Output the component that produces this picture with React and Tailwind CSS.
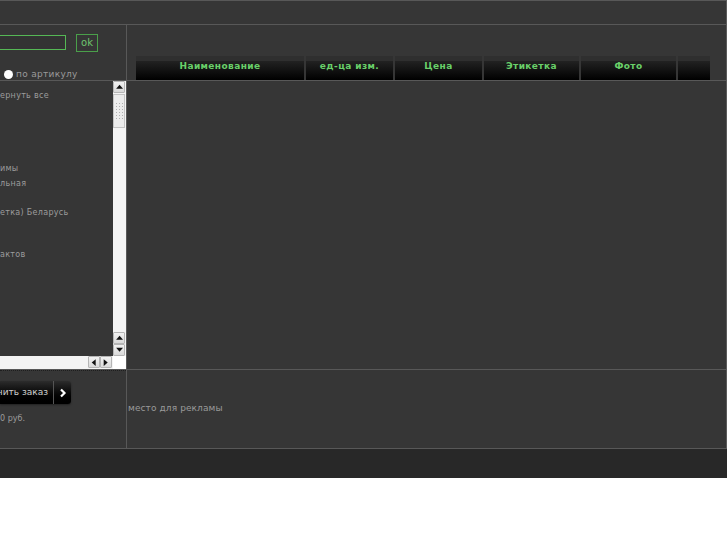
import React from "react";

const headers = [
  { label: "Наименование", w: "w-[168px]" },
  { label: "ед-ца изм.", w: "w-[87px]" },
  { label: "Цена", w: "w-[87px]" },
  { label: "Этикетка", w: "w-[95px]" },
  { label: "Фото", w: "w-[95px]" },
  { label: "", w: "w-[32px]" },
];

const Arrow = ({ dir }) => {
  const pts = {
    up: "1,5 4,1.5 7,5",
    down: "1,1.5 4,5 7,1.5",
    left: "5,1 1.5,4 5,7",
    right: "1.5,1 5,4 1.5,7",
  }[dir];
  return (
    <svg width="8" height="8" viewBox="0 0 7 7">
      <polygon points={pts} fill="#111" />
    </svg>
  );
};

const ScrollBtn = ({ dir }) => (
  <div className="w-[12px] h-[12px] flex items-center justify-center bg-gradient-to-b from-[#f2f2f2] to-[#d9d9d9] border border-[#b5b5b5] rounded-[1px]">
    <Arrow dir={dir} />
  </div>
);

const App = () => {
  return (
    <div
      className="w-[727px] min-h-[545px] bg-white"
      style={{ fontFamily: '"DejaVu Sans", Verdana, sans-serif' }}
    >
      <div className="bg-[#282828] pb-[29px]">
        <div className="w-[727px] bg-[#363636] border-r border-[#5a5a5a]">
          {/* top bar */}
          <div className="h-[25px] border-t border-[#4b4b4b] border-b border-[#585858]" />

          {/* search + header row */}
          <div className="flex h-[56px] border-b border-[#585858]">
            <div className="w-[127px] shrink-0 border-r border-[#585858] overflow-hidden">
              <div className="flex items-start mt-[10px]">
                <input
                  className="w-[80px] h-[15px] -ml-[14px] bg-[#333] border border-[#55b855] outline-none"
                  defaultValue=""
                />
                <button className="ml-[10px] -mt-[1px] w-[22px] h-[18px] border border-[#4a9f4a] bg-[#363636] text-[#6ec46e] text-[10px] leading-none">
                  ok
                </button>
              </div>
              <div className="flex items-center mt-[16px] ml-[4px] gap-[3px]">
                <span className="w-[9px] h-[9px] rounded-full bg-white" />
                <span className="text-[9px] text-[#9a9a9a] tracking-[0.3px]">по артикулу</span>
              </div>
            </div>
            <div className="flex-1 pl-[9px] pt-[31px]">
              <div className="flex gap-[2px]">
                {headers.map((h, i) => (
                  <div
                    key={i}
                    className={`${h.w} h-[24px] flex items-center justify-center pb-[2px] bg-[linear-gradient(to_bottom,#2f2f2f_0,#2f2f2f_5px,#222_5px,#000_100%)] text-[#69d069] text-[9px] font-bold tracking-[0.4px]`}
                  >
                    {h.label}
                  </div>
                ))}
              </div>
            </div>
          </div>

          {/* tree row */}
          <div className="flex h-[289px] border-b border-[#585858]">
            <div className="w-[127px] shrink-0 border-r border-[#585858] flex flex-col">
              <div className="flex flex-1">
                <div className="flex-1 relative text-[8px] text-[#9c9c9c] tracking-[0.3px]">
                  <div className="absolute top-[9px] left-0">ернуть все</div>
                  <div className="absolute top-[82px] left-0">имы</div>
                  <div className="absolute top-[97px] left-0">льная</div>
                  <div className="absolute top-[126px] left-0">етка) Беларусь</div>
                  <div className="absolute top-[168px] left-0">актов</div>
                </div>
                <div className="w-[13px] bg-[#f4f4f4] flex flex-col">
                  <ScrollBtn dir="up" />
                  <div className="w-[12px] h-[34px] mt-[1px] bg-[#ececec] border border-[#c4c4c4] flex items-center justify-center">
                    <div className="grid grid-cols-3 gap-[2px]">
                      {Array.from({ length: 18 }).map((_, i) => (
                        <span key={i} className="w-[1px] h-[1px] bg-[#b0b0b0]" />
                      ))}
                    </div>
                  </div>
                  <div className="flex-1" />
                  <ScrollBtn dir="up" />
                  <ScrollBtn dir="down" />
                </div>
              </div>
              <div className="h-[13px] bg-[#f4f4f4] flex">
                <div className="flex-1 flex justify-end pr-[1px]">
                  <ScrollBtn dir="left" />
                  <ScrollBtn dir="right" />
                </div>
                <div className="w-[13px] bg-white" />
              </div>
            </div>
            <div className="flex-1" />
          </div>

          {/* order row */}
          <div className="flex h-[79px] border-b border-[#585858]">
            <div className="w-[127px] shrink-0 border-r border-[#585858] overflow-hidden">
              <div className="h-[1px] border-t border-dotted border-[#1e1e1e]" />
              <div className="flex h-[23px] mt-[10px] w-[71px] rounded-r-[3px] bg-gradient-to-b from-[#2c2c2c] to-[#000] shadow-[0_1px_2px_rgba(0,0,0,0.4)]">
                <div className="w-[53px] flex items-center justify-end pr-[5px] text-[9px] text-[#cfcfcf] whitespace-nowrap">
                  нить заказ
                </div>
                <div className="w-[1px] bg-[#555]" />
                <div className="flex-1 flex items-center justify-center">
                  <svg width="8" height="10" viewBox="0 0 8 10">
                    <polyline points="2,1.5 5.5,5 2,8.5" fill="none" stroke="#fff" strokeWidth="2.2" />
                  </svg>
                </div>
              </div>
              <div className="mt-[9px] text-[8px] text-[#9c9c9c]">0 руб.</div>
            </div>
            <div className="flex-1 flex items-center pl-[1px] text-[9px] text-[#9a9a9a] tracking-[0.1px]">
              место для рекламы
            </div>
          </div>
        </div>
      </div>
    </div>
  );
};

export default App;
